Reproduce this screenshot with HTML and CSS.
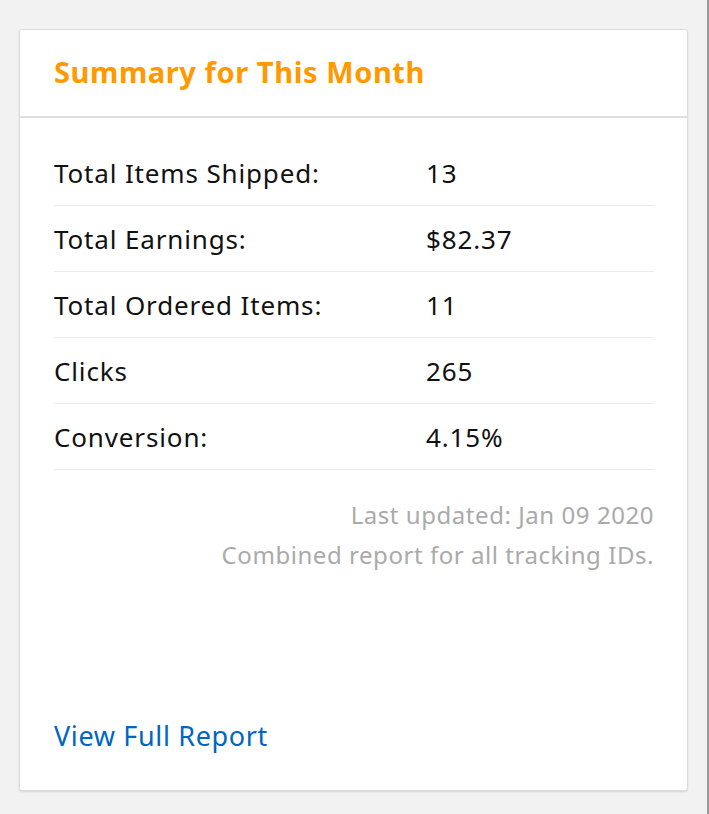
FILE: index.html
```html
<!DOCTYPE html>
<html>
<head>
<meta charset="utf-8">
<link rel="stylesheet" href="styles.css">
</head>
<body>
<div class="page">
  <div class="card">
    <div class="card-header">
      <h2 class="title">Summary for This Month</h2>
    </div>
    <div class="card-body">
      <div class="row"><span class="label">Total Items Shipped:</span><span class="value">13</span></div>
      <div class="row"><span class="label">Total Earnings:</span><span class="value">$82.37</span></div>
      <div class="row"><span class="label">Total Ordered Items:</span><span class="value">11</span></div>
      <div class="row"><span class="label">Clicks</span><span class="value">265</span></div>
      <div class="row"><span class="label">Conversion:</span><span class="value">4.15%</span></div>
      <div class="notes">
        <p class="note">Last updated: Jan 09 2020</p>
        <p class="note">Combined report for all tracking IDs.</p>
      </div>
    </div>
    <div class="card-footer">
      <a class="link" href="#">View Full Report</a>
    </div>
  </div>
</div>
</body>
</html>
```

FILE: styles.css
```css
html, body {
  margin: 0;
  padding: 0;
  height: 100%;
}
body {
  background: #f2f2f2;
  font-family: "Noto Sans", "Open Sans", sans-serif;
  color: #111;
}
.page {
  height: 100%;
  box-sizing: border-box;
  padding: 29px 0 0 19px;
  border-right: 2px solid #9a9a9a;
}
.card {
  width: 669px;
  height: 762px;
  box-sizing: border-box;
  background: #fff;
  border: 1px solid #dcdcdc;
  border-radius: 3px;
  box-shadow: 0 1px 2px rgba(0,0,0,0.12);
  display: flex;
  flex-direction: column;
}
.card-header {
  height: 88px;
  box-sizing: border-box;
  border-bottom: 2px solid #dedede;
  padding: 0 34px 4px;
  display: flex;
  align-items: center;
}
.title {
  margin: 0;
  font-size: 29px;
  font-weight: 700;
  color: #ff9900;
  letter-spacing: 0.6px;
}
.card-body {
  flex: 1;
  padding: 22px 33px 0 34px;
}
.row {
  display: flex;
  align-items: center;
  height: 66px;
  box-sizing: border-box;
  border-bottom: 1px solid #ececec;
  font-size: 26px;
  letter-spacing: 0.85px;
}
.label {
  width: 372px;
}
.notes {
  text-align: right;
  padding-top: 25px;
}
.note {
  margin: 0;
  font-size: 24px;
  letter-spacing: 0.55px;
  line-height: 40px;
  color: #aaaaaa;
}
.card-footer {
  padding: 0 34px 36px;
}
.link {
  font-size: 27px;
  letter-spacing: 0.65px;
  color: #0066c0;
  text-decoration: none;
}
```
